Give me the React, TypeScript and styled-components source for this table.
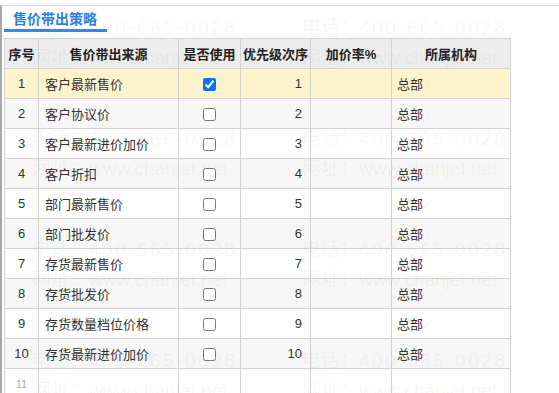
import React from 'react';
import styled, { createGlobalStyle } from 'styled-components';

const GlobalStyle = createGlobalStyle`
  body {
    margin: 0;
    background: #fff;
    font-family: 'Liberation Sans', 'Noto Sans CJK SC', sans-serif;
    color: #333;
  }
`;

const Page = styled.div`
  position: relative;
  width: 559px;
  height: 393px;
  overflow: hidden;
`;

const Frame = styled.div`
  margin-top: 5px;
  border-top: 1px solid #dcdcdc;
  border-left: 2px solid #a8a8a8;
  height: 400px;
  padding-left: 2px;
`;

const TabBar = styled.div`
  display: flex;
  height: 26px;
`;

const Tab = styled.div`
  padding: 3px 10px 0 9px;
  font-size: 14px;
  font-weight: bold;
  color: #2f7fe0;
  border-bottom: 3px solid #3b86e6;
  line-height: 20px;
`;

const Table = styled.table`
  margin-top: 6px;
  border-collapse: collapse;
  table-layout: fixed;
  width: 506px;
  font-size: 13px;
`;

const Th = styled.th`
  height: 29px;
  padding: 0;
  background: #ededed;
  border: 1px solid #d2d2d2;
  font-weight: bold;
  color: #222;
  text-align: center;
`;

const Row = styled.tr<{ $bg: string }>`
  background: ${p => p.$bg};
`;

const Td = styled.td<{ $align?: string; $pad?: number }>`
  height: 29px;
  padding: 0 ${p => p.$pad ?? 0}px;
  border: 1px solid #d2d2d2;
  text-align: ${p => p.$align ?? 'left'};
  color: #333;
  white-space: nowrap;
`;

const SeqCell = styled(Td)<{ $faint?: boolean }>`
  font-size: ${p => (p.$faint ? '11px' : '13px')};
  color: ${p => (p.$faint ? '#aaa' : '#333')};
`;

const Check = styled.input`
  width: 13px;
  height: 13px;
  margin: 0;
  vertical-align: middle;
`;

const Watermarks = styled.div`
  position: absolute;
  inset: 0;
  pointer-events: none;
  display: grid;
  grid-template-columns: repeat(2, 270px);
  grid-auto-rows: 111px;
  padding: 13px 0 0 32px;
  color: rgba(0, 0, 0, 0.05);
  font-size: 19px;
`;

const Mark = styled.div`
  line-height: 30px;
  white-space: nowrap;
`;

const Phone = styled.span`
  letter-spacing: 2.5px;
`;

const sources = [
  '客户最新售价',
  '客户协议价',
  '客户最新进价加价',
  '客户折扣',
  '部门最新售价',
  '部门批发价',
  '存货最新售价',
  '存货批发价',
  '存货数量档位价格',
  '存货最新进价加价',
];

const rowBg = (i: number) => (i === 0 ? '#fdf4ce' : i % 2 === 1 ? '#f7f7f7' : '#fff');

export default function App() {
  return (
    <Page>
      <GlobalStyle />
      <Frame>
        <TabBar>
          <Tab>售价带出策略</Tab>
        </TabBar>
        <Table>
          <colgroup>
            <col style={{ width: 34 }} />
            <col style={{ width: 140 }} />
            <col style={{ width: 62 }} />
            <col style={{ width: 70 }} />
            <col style={{ width: 81 }} />
            <col style={{ width: 119 }} />
          </colgroup>
          <thead>
            <tr>
              <Th>序号</Th>
              <Th>售价带出来源</Th>
              <Th>是否使用</Th>
              <Th>优先级次序</Th>
              <Th>加价率%</Th>
              <Th>所属机构</Th>
            </tr>
          </thead>
          <tbody>
            {sources.map((s, i) => (
              <Row key={s} $bg={rowBg(i)}>
                <SeqCell $align="center">{i + 1}</SeqCell>
                <Td $pad={6}>{s}</Td>
                <Td $align="center">
                  <Check type="checkbox" readOnly checked={i === 0} />
                </Td>
                <Td $align="right" $pad={8}>{i + 1}</Td>
                <Td />
                <Td $pad={5}>总部</Td>
              </Row>
            ))}
            <Row $bg="#fff">
              <SeqCell $align="center" $faint>11</SeqCell>
              <Td />
              <Td />
              <Td />
              <Td />
              <Td />
            </Row>
          </tbody>
        </Table>
      </Frame>
      <Watermarks>
        {Array.from({ length: 8 }).map((_, i) => (
          <div key={i}>
            <Mark>电话：<Phone>400-665-0028</Phone></Mark>
            <Mark>网址：www.chanjet.net</Mark>
          </div>
        ))}
      </Watermarks>
    </Page>
  );
}
